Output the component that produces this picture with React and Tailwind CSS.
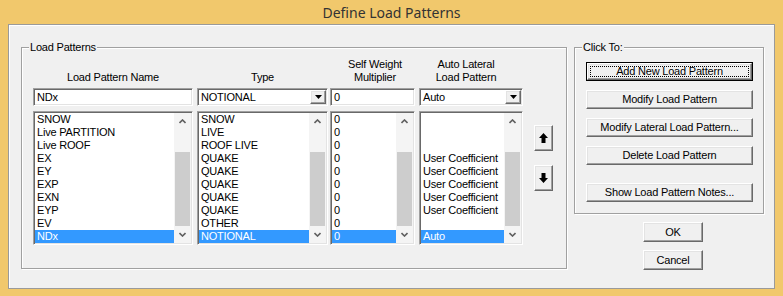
import React from 'react';

const names = ['SNOW', 'Live PARTITION', 'Live ROOF', 'EX', 'EY', 'EXP', 'EXN', 'EYP', 'EV', 'NDx'];
const types = ['SNOW', 'LIVE', 'ROOF LIVE', 'QUAKE', 'QUAKE', 'QUAKE', 'QUAKE', 'QUAKE', 'OTHER', 'NOTIONAL'];
const mults = ['0', '0', '0', '0', '0', '0', '0', '0', '0', '0'];
const autos = ['', '', '', 'User Coefficient', 'User Coefficient', 'User Coefficient', 'User Coefficient', 'User Coefficient', '', 'Auto'];

const raised =
  'bg-[#f0f0f0] border border-t-white border-l-white border-b-[#696969] border-r-[#696969] shadow-[inset_-1px_-1px_0_#a0a0a0,inset_1px_1px_0_#e3e3e3]';
const sunken =
  'bg-white border border-t-[#a0a0a0] border-l-[#a0a0a0] border-b-white border-r-white shadow-[inset_1px_1px_0_#696969,inset_-1px_-1px_0_#e3e3e3]';

function Chevron({ down }) {
  return (
    <svg width="7" height="5" viewBox="0 0 7 5">
      <polyline
        points={down ? '0.5,1 3.5,4 6.5,1' : '0.5,4 3.5,1 6.5,4'}
        fill="none"
        stroke="#606060"
        strokeWidth="1.6"
      />
    </svg>
  );
}

function ScrollBar() {
  return (
    <div className="w-[17px] flex flex-col bg-[#f4f4f4]">
      <div className="h-[17px] flex items-center justify-center">
        <Chevron />
      </div>
      <div className="flex-1 flex flex-col px-[1px]">
        <div className="h-[22px]" />
        <div className="flex-1 bg-[#cdcdcd]" />
      </div>
      <div className="h-[17px] flex items-center justify-center">
        <Chevron down />
      </div>
    </div>
  );
}

function ListBox({ items, className }) {
  return (
    <div className={`${className} h-[134px] p-[1px] flex ${sunken}`}>
      <div className="flex-1 flex flex-col">
        {items.map((t, i) => (
          <div
            key={i}
            className={`h-[13px] leading-[13px] pl-[2px] whitespace-nowrap ${
              i === items.length - 1 ? 'bg-[#3399ff] text-white' : 'text-black'
            }`}
          >
            {t}
          </div>
        ))}
      </div>
      <ScrollBar />
    </div>
  );
}

function TextBox({ value, className }) {
  return (
    <div className={`${className} h-[18px] p-[1px] flex items-center ${sunken}`}>
      <span className="pl-[2px] leading-[14px]">{value}</span>
    </div>
  );
}

function Combo({ value, className }) {
  return (
    <div className={`${className} h-[18px] p-[1px] flex ${sunken}`}>
      <span className="flex-1 pl-[2px] leading-[14px]">{value}</span>
      <div className={`w-[16px] flex items-center justify-center ${raised}`}>
        <svg width="7" height="4" viewBox="0 0 7 4">
          <polygon points="0,0 7,0 3.5,4" fill="#000" />
        </svg>
      </div>
    </div>
  );
}

function ArrowButton({ down }) {
  return (
    <div className={`w-[19px] h-[26px] flex items-center justify-center ${raised}`}>
      <svg width="9" height="10" viewBox="0 0 9 10" className={down ? 'rotate-180' : ''}>
        <polygon points="4.5,0 9,5 6.5,5 6.5,10 2.5,10 2.5,5 0,5" fill="#000" />
      </svg>
    </div>
  );
}

function PushButton({ children, className = '' }) {
  return (
    <div className={`h-[19px] flex items-center justify-center whitespace-nowrap ${raised} ${className}`}>
      {children}
    </div>
  );
}

function GroupBox({ label, className, children }) {
  return (
    <div className={`relative border border-[#a0a0a0] shadow-[1px_1px_0_#fff,inset_1px_1px_0_#fff] ${className}`}>
      <span className="absolute -top-[7px] left-[7px] px-[1px] leading-[13px] bg-[#f0f0f0]">{label}</span>
      {children}
    </div>
  );
}

export default function App() {
  return (
    <div className="w-[783px] h-[296px] bg-[#f1c86c] flex flex-col overflow-hidden font-['Liberation_Sans',Arial,sans-serif] text-[11px] tracking-[-0.2px] text-black">
      <div className="h-[24px] flex items-center justify-center font-['Noto_Sans',sans-serif] text-[14px] tracking-normal text-[#333]">
        Define Load Patterns
      </div>

      <div className="flex-1 mx-[8px] mb-[7px] bg-[#f0f0f0] border border-[#9a9a9a] shadow-[inset_1px_1px_0_#fff]">
        <div className="flex items-start pl-[12px] pt-[22px]">
          {/* Load Patterns group */}
          <GroupBox label="Load Patterns" className="w-[546px] h-[222px] pl-[11px] pt-[10px]">
            <div className="flex flex-col">
              <div className="flex h-[26px] items-end leading-[13px] text-center">
                <div className="w-[160px]">Load Pattern Name</div>
                <div className="w-[131px] ml-[4px]">Type</div>
                <div className="w-[85px] ml-[2px] pl-[5px]">
                  Self Weight
                  <br />
                  Multiplier
                </div>
                <div className="w-[104px] ml-[4px] pr-[10px]">
                  Auto Lateral
                  <br />
                  Load Pattern
                </div>
              </div>

              <div className="flex mt-[4px]">
                <TextBox value="NDx" className="w-[160px]" />
                <Combo value="NOTIONAL" className="w-[131px] ml-[4px]" />
                <TextBox value="0" className="w-[85px] ml-[2px]" />
                <Combo value="Auto" className="w-[104px] ml-[4px]" />
              </div>

              <div className="flex mt-[5px]">
                <ListBox items={names} className="w-[160px]" />
                <ListBox items={types} className="w-[131px] ml-[4px]" />
                <ListBox items={mults} className="w-[85px] ml-[2px]" />
                <ListBox items={autos} className="w-[104px] ml-[4px]" />
                <div className="ml-[11px] pt-[14px] flex flex-col gap-[14px]">
                  <ArrowButton />
                  <ArrowButton down />
                </div>
              </div>
            </div>
          </GroupBox>

          {/* Right column */}
          <div className="ml-[7px] w-[190px] flex flex-col">
            <GroupBox label="Click To:" className="h-[167px] pl-[11px] pt-[14px] flex flex-col">
              <div className="w-[167px] h-[19px] border border-black">
                <div className={`h-full p-[2px] ${raised}`}>
                  <div className="h-full border border-dotted border-black flex items-center justify-center leading-none">
                    Add New Load Pattern
                  </div>
                </div>
              </div>
              <PushButton className="w-[167px] mt-[9px]">Modify Load Pattern</PushButton>
              <PushButton className="w-[167px] mt-[9px]">Modify Lateral Load Pattern...</PushButton>
              <PushButton className="w-[167px] mt-[9px]">Delete Load Pattern</PushButton>
              <PushButton className="w-[167px] mt-[18px]">Show Load Pattern Notes...</PushButton>
            </GroupBox>
            <PushButton className="w-[60px] h-[20px] ml-[69px] mt-[8px]">OK</PushButton>
            <PushButton className="w-[60px] h-[20px] ml-[69px] mt-[8px]">Cancel</PushButton>
          </div>
        </div>
      </div>
    </div>
  );
}
